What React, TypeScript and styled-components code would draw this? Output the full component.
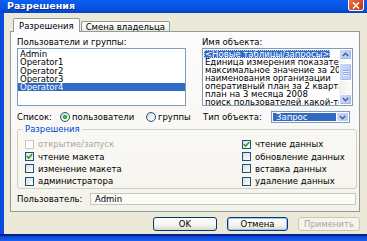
import React from "react";
import styled, { createGlobalStyle } from "styled-components";

const users = ["Admin", "Operator1", "Operator2", "Operator3", "Operator4"];

const objects = [
  "<Новые таблицы/запросы>",
  "Единица измерения показателя",
  "максимальное значение за 2008",
  "наименования организации",
  "оперативный план за 2 квартал",
  "план на 3 месяца 2008",
  "поиск пользователей какой-то",
];

const leftChecks = [
  { label: "открытие/запуск", checked: false, disabled: true },
  { label: "чтение макета", checked: true, disabled: false },
  { label: "изменение макета", checked: false, disabled: false },
  { label: "администратора", checked: false, disabled: false },
];

const rightChecks = [
  { label: "чтение данных", checked: true, disabled: false },
  { label: "обновление данных", checked: false, disabled: false },
  { label: "вставка данных", checked: false, disabled: false },
  { label: "удаление данных", checked: false, disabled: false },
];

function CheckItem({ label, checked, disabled }: { label: string; checked: boolean; disabled: boolean }) {
  return (
    <CheckRow $disabled={disabled}>
      <CheckBox $disabled={disabled}>
        {checked && (
          <svg width="7" height="7" viewBox="0 0 7 7">
            <path d="M0.8 3.2 L2.6 5 L6.2 1.2" stroke="#21a121" strokeWidth="1.6" fill="none" />
          </svg>
        )}
      </CheckBox>
      {label}
    </CheckRow>
  );
}

export default function App() {
  return (
    <>
      <GlobalStyle />
      <Window>
        <TitleBar>
          <TitleText>Разрешения</TitleText>
          <CloseButton>
            <svg width="8" height="7" viewBox="0 0 8 7">
              <path d="M1 0.5 L7 6.5 M7 0.5 L1 6.5" stroke="#fff" strokeWidth="1.6" />
            </svg>
          </CloseButton>
        </TitleBar>

        <Main>
          <TabStrip>
            <Tab $active>Разрешения</Tab>
            <Tab>Смена владельца</Tab>
          </TabStrip>

          <Panel>
            <TopGrid>
              <Column>
                <FieldLabel>Пользователи и группы:</FieldLabel>
                <ListBox>
                  <UserList>
                    {users.map((u) => (
                      <UserItem key={u} $selected={u === "Operator4"}>
                        {u}
                      </UserItem>
                    ))}
                  </UserList>
                </ListBox>
              </Column>
              <Column>
                <FieldLabel>Имя объекта:</FieldLabel>
                <ListBox>
                  <ObjectRows>
                    {objects.map((o, i) => (
                      <ObjectItem key={o}>
                        <ObjectText $selected={i === 0}>{o}</ObjectText>
                      </ObjectItem>
                    ))}
                  </ObjectRows>
                  <ScrollBar>
                    <ScrollButton>
                      <svg width="7" height="5" viewBox="0 0 7 5">
                        <path d="M0.8 4 L3.5 1.3 L6.2 4" stroke="#4d6185" strokeWidth="1.5" fill="none" />
                      </svg>
                    </ScrollButton>
                    <ScrollTrack>
                      <ScrollThumb>
                        <Grip />
                        <Grip />
                        <Grip />
                      </ScrollThumb>
                    </ScrollTrack>
                    <ScrollButton>
                      <svg width="7" height="5" viewBox="0 0 7 5">
                        <path d="M0.8 1 L3.5 3.7 L6.2 1" stroke="#4d6185" strokeWidth="1.5" fill="none" />
                      </svg>
                    </ScrollButton>
                  </ScrollBar>
                </ListBox>
              </Column>
            </TopGrid>

            <OptionsRow>
              <ListChoice>
                <ListLabel>Список:</ListLabel>
                <RadioOption $width={86}>
                  <Radio $checked />
                  пользователи
                </RadioOption>
                <RadioOption>
                  <Radio />
                  группы
                </RadioOption>
              </ListChoice>
              <TypeChoice>
                <TypeLabel>Тип объекта:</TypeLabel>
                <Combo>
                  <ComboValue>Запрос</ComboValue>
                  <ComboButton>
                    <svg width="7" height="5" viewBox="0 0 7 5">
                      <path d="M0.8 1 L3.5 3.7 L6.2 1" stroke="#4d6185" strokeWidth="1.5" fill="none" />
                    </svg>
                  </ComboButton>
                </Combo>
              </TypeChoice>
            </OptionsRow>

            <GroupBox>
              <GroupLegend>Разрешения</GroupLegend>
              <CheckGrid>
                {leftChecks.map((c) => (
                  <CheckItem key={c.label} {...c} />
                ))}
                {rightChecks.map((c) => (
                  <CheckItem key={c.label} {...c} />
                ))}
              </CheckGrid>
            </GroupBox>

            <UserRow>
              <UserLabel>Пользователь:</UserLabel>
              <UserField>Admin</UserField>
            </UserRow>
          </Panel>

          <ButtonRow>
            <Button $width={64}>OK</Button>
            <Button $width={61} $focused>
              Отмена
            </Button>
            <Button $width={62} $disabled>
              Применить
            </Button>
          </ButtonRow>
        </Main>

        <BottomFrame />
      </Window>
    </>
  );
}

/* ---------------- styled-components ---------------- */

const GlobalStyle = createGlobalStyle`
  * { box-sizing: border-box; }
  html, body {
    margin: 0;
    padding: 0;
    background: #ece9d8;
  }
  body {
    width: 367px;
    height: 241px;
    overflow: hidden;
    font-family: "DejaVu Sans", Verdana, sans-serif;
    font-size: 8.5px;
    color: #000;
  }
`;

const Window = styled.div`
  width: 367px;
  height: 241px;
  display: flex;
  flex-direction: column;
  background: #ece9d8;
`;

const TitleBar = styled.div`
  height: 13px;
  flex-shrink: 0;
  display: flex;
  justify-content: space-between;
  align-items: flex-start;
  padding: 0 3px 0 7px;
  background: linear-gradient(#0c5ff0, #0655e4 55%, #0445c8);
`;

const TitleText = styled.span`
  color: #fff;
  font-weight: bold;
  font-size: 9.5px;
  line-height: 12px;
  text-shadow: 1px 1px #0b2a8a;
`;

const CloseButton = styled.div`
  width: 16px;
  height: 11px;
  display: flex;
  align-items: center;
  justify-content: center;
  background: linear-gradient(135deg, #e8744c, #d5471f 60%, #b8350f);
  border: 1px solid #fff;
  border-top: none;
  border-radius: 0 0 3px 3px;
`;

const Main = styled.div`
  flex: 1;
  display: flex;
  flex-direction: column;
  padding: 5px 0 0 6px;
  border-left: 4px solid #0b4cdc;
`;

const BottomFrame = styled.div`
  height: 7px;
  flex-shrink: 0;
  background: linear-gradient(#0a1f8c 0 2px, #0a45d2 2px, #1a5ff0);
`;

const TabStrip = styled.div`
  display: flex;
  align-items: flex-end;
  height: 14px;
  padding-left: 3px;
  margin-bottom: -1px;
  position: relative;
  z-index: 1;
`;

const Tab = styled.div<{ $active?: boolean }>`
  height: ${(p) => (p.$active ? 14 : 11)}px;
  padding: 0 ${(p) => (p.$active ? 5 : 4)}px;
  display: flex;
  align-items: center;
  border: 1px solid #919b9c;
  border-bottom: ${(p) => (p.$active ? "none" : "1px solid #919b9c")};
  border-radius: 2px 2px 0 0;
  background: ${(p) => (p.$active ? "#fcfcfe" : "linear-gradient(#fff, #f3f3ef 70%, #e4e3dc)")};
  margin-left: ${(p) => (p.$active ? 0 : 1)}px;
  padding-top: ${(p) => (p.$active ? 1 : 0)}px;
  white-space: nowrap;
`;

const Panel = styled.div`
  width: 350px;
  height: 181px;
  display: flex;
  flex-direction: column;
  padding: 5px 3px 0 6px;
  border: 1px solid #919b9c;
  background: linear-gradient(#fcfcfe, #f7f6f1 80%, #f2f1ea);
`;

const TopGrid = styled.div`
  display: grid;
  grid-template-columns: 169px 151px;
  column-gap: 16px;
`;

const Column = styled.div`
  display: flex;
  flex-direction: column;
`;

const FieldLabel = styled.div`
  height: 11px;
  line-height: 10px;
  white-space: nowrap;
`;

const ListBox = styled.div`
  height: 58px;
  display: flex;
  border: 1px solid #7f9db9;
  background: #fff;
  overflow: hidden;
`;

const UserList = styled.div`
  flex: 1;
  display: flex;
  flex-direction: column;
  padding-top: 1px;
`;

const UserItem = styled.div<{ $selected?: boolean }>`
  height: 8.3px;
  line-height: 8.3px;
  padding-left: 2px;
  white-space: nowrap;
  background: ${(p) => (p.$selected ? "#316ac5" : "transparent")};
  color: ${(p) => (p.$selected ? "#fff" : "#000")};
`;

const ObjectRows = styled.div`
  flex: 1;
  min-width: 0;
  overflow: hidden;
  padding-top: 1px;
`;

const ObjectItem = styled.div`
  height: 8px;
  line-height: 8px;
  padding-left: 1px;
  white-space: nowrap;
`;

const ObjectText = styled.span<{ $selected?: boolean }>`
  display: inline-block;
  vertical-align: top;
  height: 8px;
  line-height: 8px;
  padding: 0 1px;
  background: ${(p) => (p.$selected ? "#316ac5" : "transparent")};
  color: ${(p) => (p.$selected ? "#fff" : "#000")};
  outline: ${(p) => (p.$selected ? "1px dotted #c9d6ee" : "none")};
  outline-offset: -1px;
`;

const ScrollBar = styled.div`
  width: 13px;
  flex-shrink: 0;
  display: flex;
  flex-direction: column;
  background: #f4f3ee;
`;

const ScrollButton = styled.div`
  height: 11px;
  display: flex;
  align-items: center;
  justify-content: center;
  border: 1px solid #fff;
  border-radius: 2px;
  background: linear-gradient(90deg, #c5d5fc, #b7cbf8);
  box-shadow: inset -1px -1px #9db4e8;
`;

const ScrollTrack = styled.div`
  flex: 1;
  padding-top: 3px;
  background: linear-gradient(90deg, #f1efe6, #fefefb);
`;

const ScrollThumb = styled.div`
  height: 18px;
  display: flex;
  flex-direction: column;
  align-items: center;
  justify-content: center;
  gap: 1px;
  border: 1px solid #fff;
  border-radius: 2px;
  background: linear-gradient(90deg, #c9d8fc, #b8ccf8);
  box-shadow: inset -1px -1px #a3b9ec;
`;

const Grip = styled.div`
  width: 6px;
  height: 1px;
  background: #8aa4e0;
  box-shadow: 0 1px #eef3fe;
`;

const OptionsRow = styled.div`
  display: grid;
  grid-template-columns: 185px 151px;
  height: 12px;
  margin-top: 5px;
`;

const ListChoice = styled.div`
  display: flex;
  align-items: center;
`;

const ListLabel = styled.span`
  width: 43px;
`;

const RadioOption = styled.label<{ $width?: number }>`
  display: flex;
  align-items: center;
  gap: 2px;
  width: ${(p) => (p.$width ? `${p.$width}px` : "auto")};
  white-space: nowrap;
`;

const Radio = styled.span<{ $checked?: boolean }>`
  width: 10px;
  height: 10px;
  border-radius: 50%;
  border: 1px solid #1c5180;
  background: ${(p) =>
    p.$checked
      ? "radial-gradient(circle, #55d255 0, #21a121 1.8px, transparent 2.4px), linear-gradient(135deg, #dcdcd7, #fff)"
      : "linear-gradient(135deg, #dcdcd7, #fff)"};
  flex-shrink: 0;
`;

const TypeChoice = styled.div`
  display: flex;
  align-items: center;
  padding-left: 1px;
`;

const TypeLabel = styled.span`
  width: 68px;
  white-space: nowrap;
`;

const Combo = styled.div`
  width: 79px;
  height: 12px;
  display: flex;
  padding: 1px;
  border: 1px solid #7f9db9;
  background: #fff;
`;

const ComboValue = styled.div`
  flex: 1;
  padding-left: 3px;
  line-height: 8px;
  background: #316ac5;
  color: #fff;
  margin-right: 1px;
`;

const ComboButton = styled.div`
  width: 11px;
  display: flex;
  align-items: center;
  justify-content: center;
  border-radius: 1px;
  background: linear-gradient(90deg, #c5d5fc, #b4c8f6);
`;

const GroupBox = styled.fieldset`
  width: 340px;
  margin: 1px 0 0;
  padding: 4px 0 0 7px;
  border: 1px solid #d0d0bf;
  border-radius: 3px;
`;

const GroupLegend = styled.legend`
  padding: 0 2px;
  margin-left: -2px;
  line-height: 10px;
  color: #0046d5;
`;

const CheckGrid = styled.div`
  display: grid;
  grid-template-columns: 217px 1fr;
  grid-template-rows: repeat(4, 12.4px);
  grid-auto-flow: column;
`;

const CheckRow = styled.div<{ $disabled?: boolean }>`
  display: flex;
  align-items: center;
  gap: 4px;
  white-space: nowrap;
  color: ${(p) => (p.$disabled ? "#aca899" : "#000")};
`;

const CheckBox = styled.span<{ $disabled?: boolean }>`
  width: 9px;
  height: 9px;
  display: flex;
  align-items: center;
  justify-content: center;
  border: 1px solid ${(p) => (p.$disabled ? "#cac8bb" : "#1c5180")};
  background: ${(p) => (p.$disabled ? "#fff" : "linear-gradient(135deg, #dcdcd7, #fff)")};
  flex-shrink: 0;
`;

const UserRow = styled.div`
  display: flex;
  align-items: center;
  height: 12px;
  margin-top: 4px;
`;

const UserLabel = styled.span`
  width: 73px;
  white-space: nowrap;
`;

const UserField = styled.div`
  width: 266px;
  height: 12px;
  line-height: 10px;
  padding-left: 4px;
  border: 1px solid #c9c7ba;
  background: #fbfbf8;
`;

const ButtonRow = styled.div`
  width: 350px;
  display: flex;
  justify-content: flex-end;
  gap: 10px;
  margin-top: 5px;
`;

const Button = styled.div<{ $width: number; $disabled?: boolean; $focused?: boolean }>`
  width: ${(p) => p.$width}px;
  height: 14px;
  display: flex;
  align-items: center;
  justify-content: center;
  border: 1px solid ${(p) => (p.$disabled ? "#c9c7ba" : "#003c74")};
  border-radius: 3px;
  color: ${(p) => (p.$disabled ? "#aca899" : "#000")};
  background: ${(p) =>
    p.$disabled ? "#f5f4ea" : "linear-gradient(#ffffff, #f4f3ee 60%, #dcd8cc)"};
  box-shadow: ${(p) => (p.$focused ? "inset 0 0 0 1px #a8c4f0" : "none")};
`;
